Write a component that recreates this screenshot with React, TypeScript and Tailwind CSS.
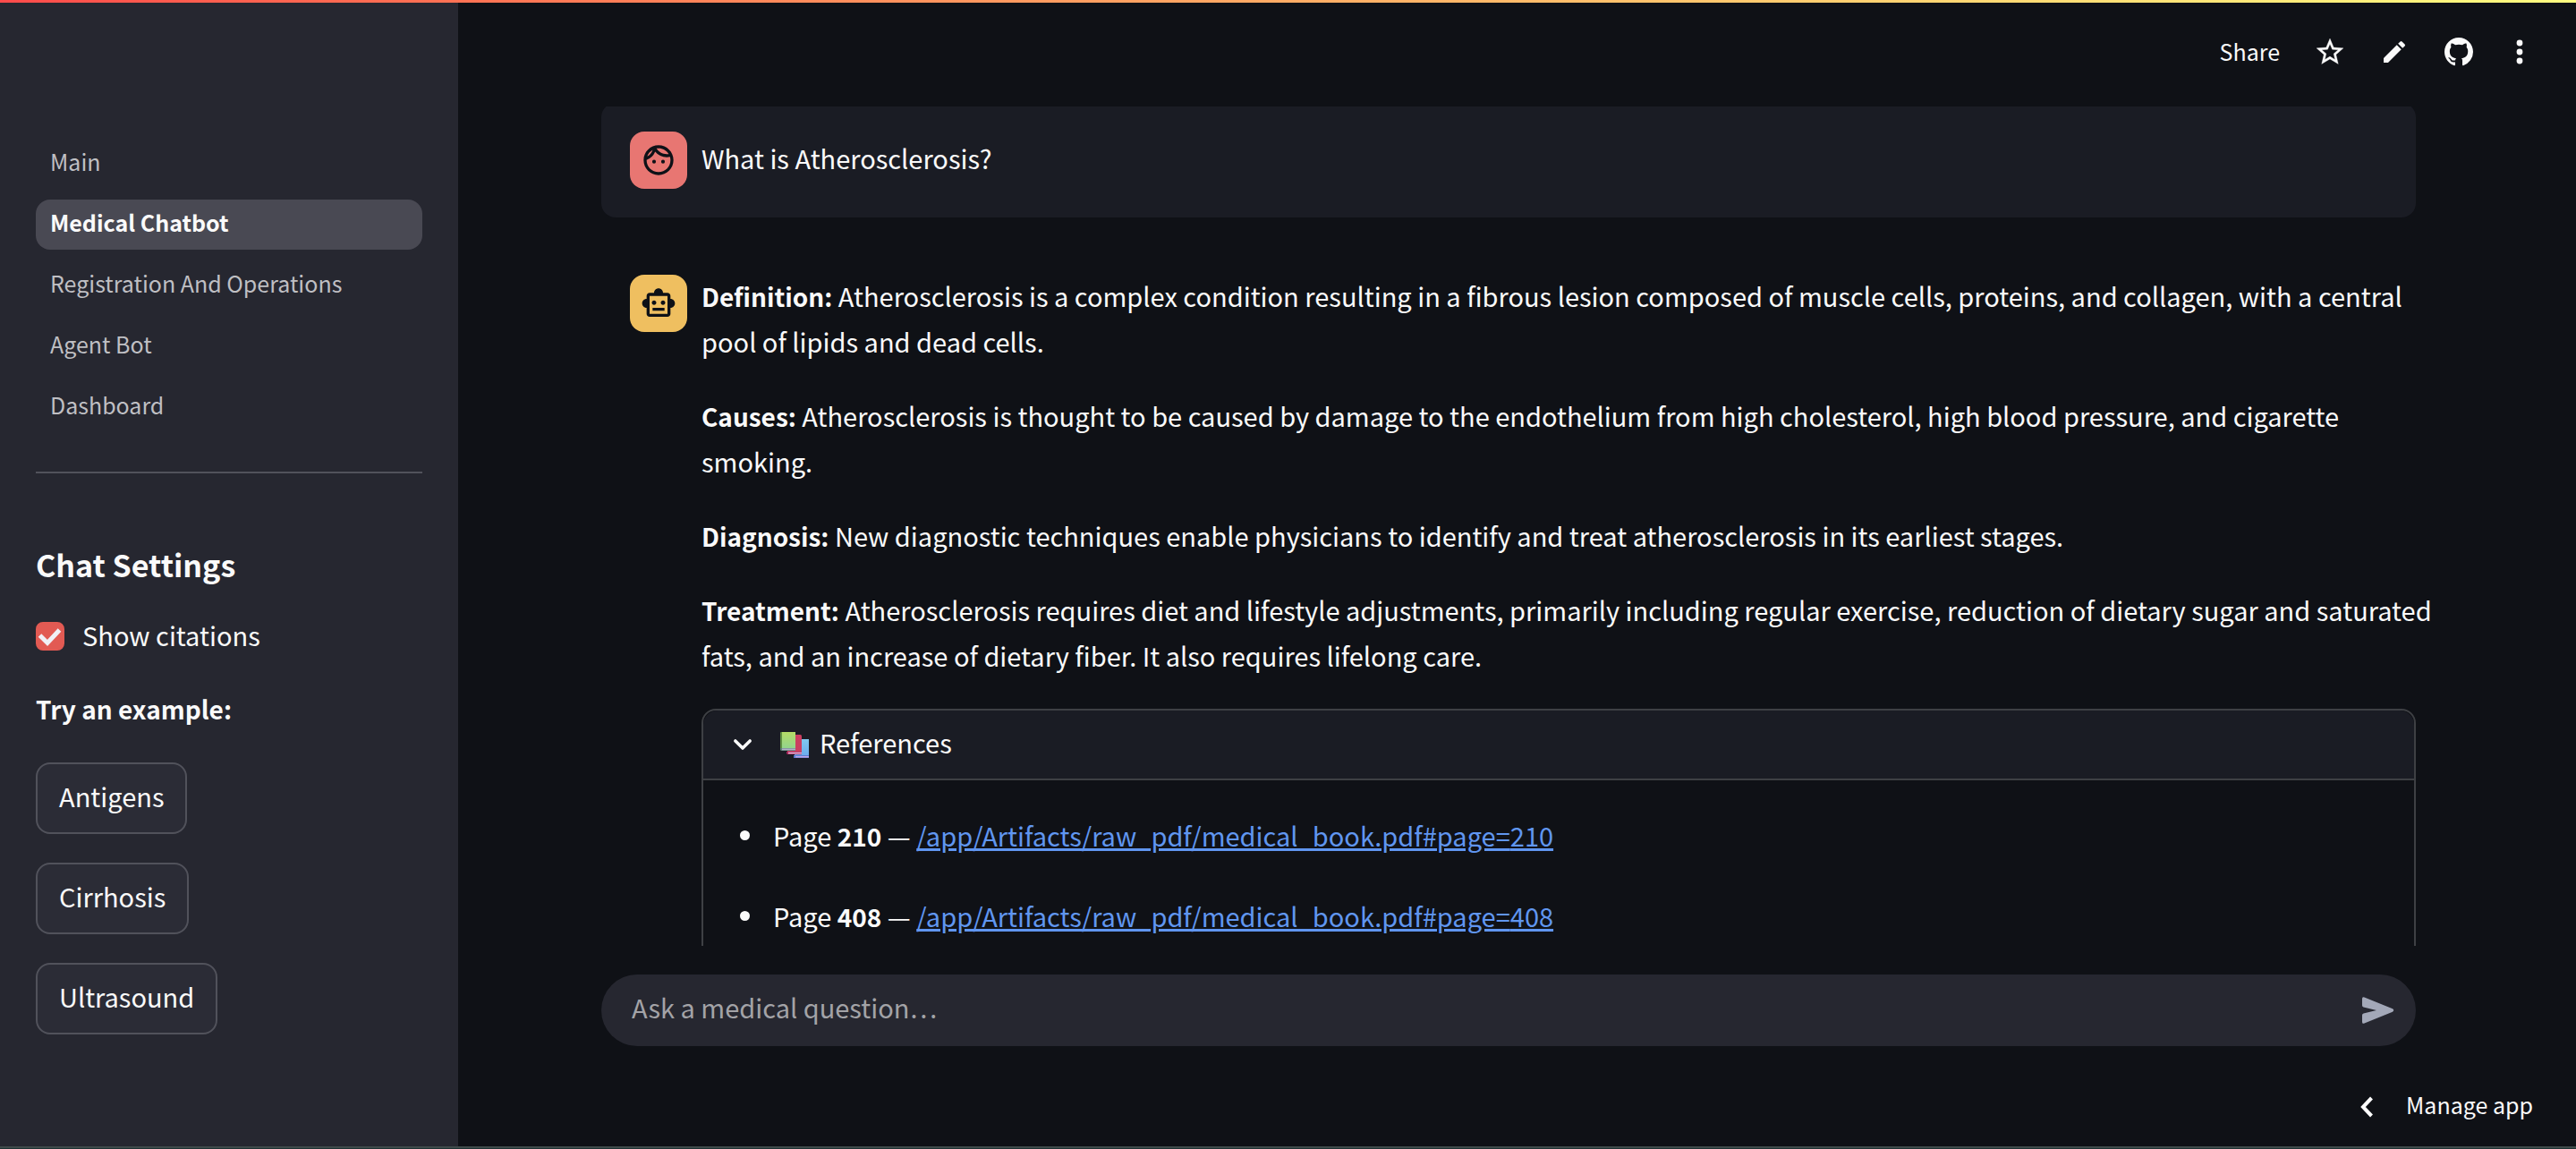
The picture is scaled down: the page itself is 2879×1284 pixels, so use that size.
import React from "react";

const pages = ["Main", "Medical Chatbot", "Registration And Operations", "Agent Bot", "Dashboard"];
const examples = ["Antigens", "Cirrhosis", "Ultrasound"];

const answer = [
  ["Definition:", "Atherosclerosis is a complex condition resulting in a fibrous lesion composed of muscle cells, proteins, and collagen, with a central pool of lipids and dead cells."],
  ["Causes:", "Atherosclerosis is thought to be caused by damage to the endothelium from high cholesterol, high blood pressure, and cigarette smoking."],
  ["Diagnosis:", "New diagnostic techniques enable physicians to identify and treat atherosclerosis in its earliest stages."],
  ["Treatment:", "Atherosclerosis requires diet and lifestyle adjustments, primarily including regular exercise, reduction of dietary sugar and saturated fats, and an increase of dietary fiber. It also requires lifelong care."],
];

const references = [210, 408];

function Sidebar() {
  return (
    <aside className="flex w-[512px] shrink-0 flex-col bg-[#262730] px-10 pt-[152px]">
      <nav className="flex flex-col gap-3 text-[25px]">
        {pages.map((page) =>
          page === "Medical Chatbot" ? (
            <a key={page} href="#" aria-current="page" className="flex h-14 items-center rounded-2xl bg-[#494953] px-4 pb-1 font-bold text-[#fafafa]">
              {page}
            </a>
          ) : (
            <a key={page} href="#" className="flex h-14 items-center rounded-2xl px-4 pb-1 text-[#bfbfc3]">
              {page}
            </a>
          ),
        )}
      </nav>
      <hr className="mt-11 border-t-2 border-[#51525b]" />
      <h2 className="mt-[78px] text-[34px] leading-12 font-bold">Chat Settings</h2>
      <label className="mt-8 flex h-12 items-center gap-5">
        <span className="relative flex size-8">
          <input type="checkbox" defaultChecked className="peer size-8 appearance-none rounded-lg border-2 border-[#51525b] checked:border-[#e25a53] checked:bg-[#e25a53]" />
          <svg viewBox="0 0 32 32" className="pointer-events-none absolute inset-0 size-8 opacity-0 peer-checked:opacity-100" fill="none" stroke="#f0f0f6" strokeWidth="5">
            <path d="M4.500 15l8.500 8.500L26.500 9" />
          </svg>
        </span>
        <span className="pb-0.5">Show citations</span>
      </label>
      <p className="mt-8 text-[28px] leading-[51px] font-bold">Try an example:</p>
      <div className="mt-[34px] flex flex-col items-start gap-8">
        {examples.map((example) => (
          <button key={example} type="button" className="h-20 rounded-2xl border-2 border-[#51525b] bg-[#2b2c36] px-6 pb-1">
            {example}
          </button>
        ))}
      </div>
    </aside>
  );
}

function Toolbar() {
  return (
    <header className="flex h-[116px] shrink-0 items-center justify-end gap-9 pr-[49px] pb-1.5 text-[25px]">
      <button type="button" className="pr-0.5">
        Share
      </button>
      <button type="button" aria-label="Favorite" className="flex w-9 justify-center">
        <svg viewBox="0 0 24 24" className="size-9" fill="#fafafa">
          <path d="M22 9.240l-7.190-.62L12 2 9.190 8.630 2 9.240l5.460 4.730L5.820 21 12 17.270 18.180 21l-1.630-7.030L22 9.240zM12 15.400l-3.760 2.270 1-4.280-3.320-2.880 4.380-.38L12 6.100l1.710 4.040 4.380.38-3.320 2.880 1 4.280L12 15.400z" stroke="#fafafa" strokeWidth="0.200" strokeLinejoin="round" />
        </svg>
      </button>
      <button type="button" aria-label="Edit" className="flex w-9 justify-center">
        <svg viewBox="0 0 24 24" className="size-8" fill="#fafafa">
          <path d="M3 17.250V21h3.750L17.810 9.940l-3.750-3.750L3 17.250zM20.710 7.040a1 1 0 0 0 0-1.410l-2.340-2.340a1 1 0 0 0-1.410 0l-1.830 1.830 3.750 3.750 1.830-1.830z" />
        </svg>
      </button>
      <button type="button" aria-label="View source" className="flex w-9 justify-center">
        <svg viewBox="0 0 16 16" className="size-8" fill="#fafafa">
          <path d="M8 0C3.580 0 0 3.580 0 8c0 3.540 2.290 6.530 5.470 7.590.4.070.55-.17.55-.38 0-.19-.01-.82-.01-1.490-2.010.37-2.530-.49-2.690-.94-.09-.23-.48-.94-.82-1.130-.28-.15-.68-.52-.01-.53.63-.01 1.080.58 1.230.82.72 1.210 1.870.87 2.330.66.07-.52.28-.87.51-1.070-1.780-.2-3.640-.89-3.640-3.950 0-.87.31-1.590.82-2.150-.08-.2-.36-1.020.08-2.120 0 0 .67-.21 2.200.82.64-.18 1.320-.27 2-.27s1.360.09 2 .27c1.530-1.040 2.200-.82 2.200-.82.44 1.100.16 1.920.08 2.120.51.56.82 1.270.82 2.150 0 3.070-1.870 3.750-3.650 3.950.29.25.54.73.54 1.480 0 1.070-.01 1.930-.01 2.200 0 .21.15.46.55.38A8.010 8.010 0 0 0 16 8c0-4.420-3.580-8-8-8z" />
        </svg>
      </button>
      <button type="button" aria-label="More options">
        <svg viewBox="0 0 28 40" className="h-10 w-7" fill="#fafafa">
          <circle cx="14" cy="10" r="3.400" />
          <circle cx="14" cy="20" r="3.400" />
          <circle cx="14" cy="30" r="3.400" />
        </svg>
      </button>
    </header>
  );
}

function UserAvatar() {
  return (
    <div className="flex size-16 shrink-0 items-center justify-center rounded-2xl bg-[#e87672]">
      <svg viewBox="0 0 24 24" className="size-10" fill="#0e1117">
        <path d="M10.250 13a1.250 1.250 0 1 1-2.500 0 1.250 1.250 0 0 1 2.500 0zM15 11.750a1.250 1.250 0 1 0 0 2.500 1.250 1.250 0 0 0 0-2.500zM22 12c0 5.520-4.480 10-10 10S2 17.520 2 12 6.480 2 12 2s10 4.480 10 10zM10.660 4.120C12.060 6.440 14.600 8 17.500 8c.46 0 .91-.05 1.340-.12C17.440 5.560 14.900 4 12 4c-.46 0-.91.05-1.340.12zM4.420 9.470a8.046 8.046 0 0 0 3.660-4.440 8.046 8.046 0 0 0-3.660 4.440zM20 12c0-.78-.12-1.530-.33-2.240-.7.150-1.420.24-2.170.24a10 10 0 0 1-7.760-3.690A10.016 10.016 0 0 1 4 11.860c.01.040 0 .090 0 .140 0 4.410 3.590 8 8 8s8-3.590 8-8z" />
      </svg>
    </div>
  );
}

function BotAvatar() {
  return (
    <div className="flex size-16 shrink-0 items-center justify-center rounded-2xl bg-[#efbf60]">
      <svg viewBox="0 0 24 24" className="size-10" fill="#0e1117">
        <path d="M20 9V7c0-1.100-.9-2-2-2h-3c0-1.660-1.340-3-3-3S9 3.340 9 5H6c-1.100 0-2 .9-2 2v2c-1.660 0-3 1.340-3 3s1.340 3 3 3v4c0 1.100.9 2 2 2h12c1.100 0 2-.9 2-2v-4c1.660 0 3-1.340 3-3s-1.340-3-3-3zm-2 10H6V7h12v12zm-9-6c-.83 0-1.500-.67-1.500-1.500S8.170 10 9 10s1.500.67 1.500 1.500S9.830 13 9 13zm7.500-1.500c0 .83-.67 1.500-1.500 1.500s-1.500-.67-1.500-1.500.67-1.500 1.500-1.500 1.500.67 1.500 1.500zM8 15h8v2H8v-2z" />
      </svg>
    </div>
  );
}

function Books() {
  return (
    <svg viewBox="0 0 32 29" className="h-[29px] w-8" aria-hidden="true">
      <defs>
        <linearGradient id="green" x1="0" y1="0" x2="0" y2="1">
          <stop offset="0" stopColor="#b4dc66" />
          <stop offset="1" stopColor="#8fd491" />
        </linearGradient>
        <linearGradient id="blue" x1="0" y1="0" x2="0" y2="1">
          <stop offset="0" stopColor="#80c8ef" />
          <stop offset="1" stopColor="#6aa8ec" />
        </linearGradient>
      </defs>
      <path d="M16 8h16v21H16z" fill="url(#blue)" />
      <path d="M15 26h17v3H15z" fill="#5c78cf" />
      <path d="M17 27h15v1.500H17z" fill="#c0a8e8" />
      <path d="M8 3h14.500q1.500 0 1.500 1.500V25H8z" fill="#cb3e60" />
      <path d="M7 22h17v3H9q-2 0-2-1.500z" fill="#a52459" />
      <path d="M9 22.800h15v1.400H9z" fill="#eac6e6" />
      <path d="M0 2q0-2 2-2h15v20H0z" fill="url(#green)" />
      <path d="M0 2q0-2 2-2v20H0z" fill="#5f8f43" />
      <path d="M0 18h17v3H2q-2 0-2-1.500z" fill="#5f8079" />
      <path d="M2 18.500h15v1.700H2z" fill="#b4b0cc" />
    </svg>
  );
}

function Chat() {
  return (
    <div className="-mr-8 flex min-h-0 flex-1 flex-col overflow-hidden pr-8">
      <section className="-mt-1 flex shrink-0 items-center gap-4 rounded-2xl bg-[#1a1c24] p-8">
        <UserAvatar />
        <p className="pb-1">What is Atherosclerosis?</p>
      </section>
      <section className="mt-8 flex shrink-0 items-start gap-4 py-8 pl-8">
        <BotAvatar />
        <div className="-mt-0.5 min-w-0 flex-1">
          <div className="-mr-6 flex flex-col gap-8">
            {answer.map(([term, text]) => (
              <p key={term} className="leading-[51px]">
                <strong className="text-[28px] leading-none">{term}</strong> {text}
              </p>
            ))}
          </div>
          <details open className="mt-[34px] rounded-2xl border-2 border-[#3e4044]">
            <summary className="flex h-[78px] list-none items-center rounded-t-2xl border-b-2 border-[#3e4044] bg-[#1a1c24] pl-[30px]">
              <svg viewBox="0 0 24 24" className="mr-7 size-7" fill="none" stroke="#fafafa" strokeWidth="3" strokeLinecap="round" strokeLinejoin="round">
                <path d="M5 8.500l7 7 7-7" />
              </svg>
              <Books />
              <span className="ml-3 pb-1">References</span>
            </summary>
            <ul className="flex flex-col gap-[39px] pt-9 pb-8 pl-[41px]">
              {references.map((page) => (
                <li key={page} className="flex items-center gap-[26px] leading-[51px] before:size-[11px] before:rounded-full before:bg-[#fafafa]">
                  <span>
                    Page <strong className="text-[28px] leading-none">{page}</strong> —{" "}
                    <a href={`#page=${page}`} className="text-[#6096f0] underline decoration-[3px]">
                      /app/Artifacts/raw_pdf/medical_book.pdf#page={page}
                    </a>
                  </span>
                </li>
              ))}
            </ul>
          </details>
        </div>
      </section>
    </div>
  );
}

export default function App() {
  return (
    <div className="flex h-screen flex-col bg-[#0f1116] font-['Noto_Sans_CJK_SC',sans-serif] text-[29px] text-[#fafafa]">
      <div className="h-[3px] shrink-0 bg-linear-to-r from-[#ff4b4b] to-[#fffd80]" />
      <div className="flex min-h-0 flex-1">
        <Sidebar />
        <main className="flex min-w-0 flex-1 flex-col">
          <Toolbar />
          <div className="flex min-h-0 flex-1 flex-col pr-[179px] pl-40">
            <Chat />
            <form className="mt-8 flex h-20 shrink-0 items-center rounded-full bg-[#262730] pr-5 pl-[34px]">
              <input aria-label="Ask a medical question" placeholder="Ask a medical question…" className="min-w-0 flex-1 bg-transparent pb-1.5 outline-none placeholder:text-[#a3a3a7]" />
              <button type="button" aria-label="Send">
                <svg viewBox="0 0 36 30" className="mr-1 h-[30px] w-9" fill="#a3a8b8">
                  <path d="M0 2Q0-.5 2.500.4L34 13.300Q36.500 15 34 16.700L2.500 29.600Q0 30.500 0 28V20.500Q0 19 1.500 18.600L16 15 1.500 11.400Q0 11 0 9.500z" />
                </svg>
              </button>
            </form>
          </div>
          <button type="button" className="mt-[34px] mr-7 mb-2.5 flex h-[68px] shrink-0 items-center gap-9 self-end px-5 text-[25px]">
            <svg viewBox="0 0 16 24" className="h-6 w-4" fill="none" stroke="#ffffff" strokeWidth="4">
              <path d="M13.500 2L4 12l9.500 10" />
            </svg>
            <span className="pb-1">Manage app</span>
          </button>
        </main>
      </div>
      <div className="h-[3px] shrink-0 border-t-2 border-[#3f4a4a] bg-[#1e3334]" />
    </div>
  );
}
